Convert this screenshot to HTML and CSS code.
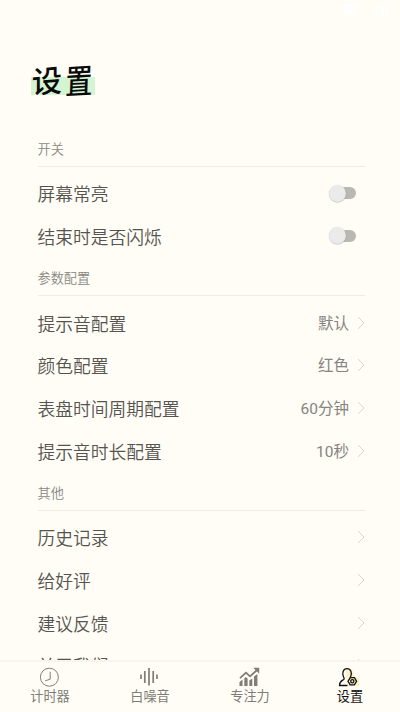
FILE: index.html
```
<!DOCTYPE html>
<html lang="zh-CN">
  <head>
    <meta charset="UTF-8" />
    <meta name="viewport" content="width=device-width, initial-scale=1.0" />
    <title>设置</title>
    <link rel="stylesheet" href="styles.css" />
  </head>

  <body>
    <header class="status">
      <svg class="status-icons" viewBox="0 0 60 20">
        <path d="M9 4h9v10H9zM20 5h6v3h-6zM41 6h3v10h-3zM47 6h2v10h-2zM51 6h2v10h-2z" />
      </svg>
    </header>

    <main class="page">
      <h1 class="title"><span class="char-left">设</span><span class="char-right">置</span></h1>

      <section>
        <h2>开关</h2>
        <ul>
          <li>屏幕常亮<span class="switch"></span></li>
          <li>结束时是否闪烁<span class="switch"></span></li>
        </ul>
      </section>

      <section>
        <h2>参数配置</h2>
        <ul>
          <li>提示音配置<span class="value">默认</span><svg class="arrow" viewBox="0 0 8 14"><path d="M1 1l6 6-6 6" /></svg></li>
          <li>颜色配置<span class="value">红色</span><svg class="arrow" viewBox="0 0 8 14"><path d="M1 1l6 6-6 6" /></svg></li>
          <li>表盘时间周期配置<span class="value">60分钟</span><svg class="arrow" viewBox="0 0 8 14"><path d="M1 1l6 6-6 6" /></svg></li>
          <li>提示音时长配置<span class="value">10秒</span><svg class="arrow" viewBox="0 0 8 14"><path d="M1 1l6 6-6 6" /></svg></li>
        </ul>
      </section>

      <section>
        <h2>其他</h2>
        <ul>
          <li>历史记录<span class="value"></span><svg class="arrow" viewBox="0 0 8 14"><path d="M1 1l6 6-6 6" /></svg></li>
          <li>给好评<span class="value"></span><svg class="arrow" viewBox="0 0 8 14"><path d="M1 1l6 6-6 6" /></svg></li>
          <li>建议反馈<span class="value"></span><svg class="arrow" viewBox="0 0 8 14"><path d="M1 1l6 6-6 6" /></svg></li>
          <li>关于我们<span class="value"></span><svg class="arrow" viewBox="0 0 8 14"><path d="M1 1l6 6-6 6" /></svg></li>
        </ul>
      </section>
    </main>

    <nav class="tabs">
      <a class="tab">
        <svg class="icon" viewBox="0 0 20 20">
          <circle cx="9.4" cy="10.2" r="9" />
          <path d="M10.2 4.8v7.4l-5 1.6" />
        </svg>
        计时器
      </a>
      <a class="tab">
        <svg class="icon bars" viewBox="0 0 20 20">
          <path d="M1 7.5v4.5M4.8 4v12M9 1v17.5M13.2 4v12M17 7.5v4.5" />
        </svg>
        白噪音
      </a>
      <a class="tab">
        <svg class="icon chart" viewBox="0 0 20 20">
          <path class="line" d="M0 11.2L6 5.7l4 3.7L17 3" />
          <path d="M13.2.8h6v6zM-.5 15l3-2.5V19h-3zM4.3 11.500l1.500-1.500 1.800 1.500V19H4.300zM9.300 13.500l3-2V19h-3zM14 9.500l3.400-2.500V19H14z" />
        </svg>
        专注力
      </a>
      <a class="tab active">
        <svg class="icon" viewBox="0 0 20 20">
          <path class="glow" d="M5 2h7l2 7 5 2v8H8z" />
          <path d="M7.5 18.500H-.5c0-3 1.300-4.300 3.200-5.300 1.600-.8 1.900-1.700.9-3.100C1.600 6.400 3.200 1.700 7 1.700s5.500 4.300 3.500 8.300" />
          <path d="M8 14.300l2.200-3.600h4.200l2.200 3.600-2.200 3.600h-4.200z" />
          <circle cx="12.300" cy="14.300" r="1.600" />
        </svg>
        设置
      </a>
    </nav>
  </body>
</html>
```
FILE: styles.css
```
* {
  margin: 0;
  padding: 0;
  box-sizing: border-box;
}

body {
  height: 712px;
  overflow: hidden;
  display: flex;
  flex-direction: column;
  background-color: #fffdf6;
  color: #555450;
  font-family: Roboto, "Noto Sans CJK SC", sans-serif;
}

.status {
  flex: none;
  height: 20px;
  display: flex;
  justify-content: flex-end;
  padding-right: 5px;
}

.status-icons {
  width: 60px;
  height: 20px;
  fill: #fff;
}

.page {
  flex: 1;
  min-height: 0;
  overflow: hidden;
  padding: 44px 35px 0 37.5px;
}

.title {
  display: flex;
  width: 64px;
  height: 34px;
  margin-left: -6.5px;
  margin-bottom: 30px;
  background: linear-gradient(#d5f4d2, #d5f4d2) 0 13px / 64px 18px no-repeat;
  color: #0a0a0a;
  font-size: 32px;
  font-weight: 500;
  line-height: 37px;
}

.char-left {
  transform: rotate(-5deg) skewX(-5deg) scale(0.95, 0.95);
}

.char-right {
  transform: rotate(-3deg) skewX(-5deg) scale(0.85, 1.05);
}

h2 {
  height: 38.9px;
  padding-top: 11px;
  border-bottom: 1px solid #eeece5;
  color: #898883;
  font-size: 13.2px;
  font-weight: 350;
  line-height: 22px;
}

ul {
  padding-top: 5.1px;
  list-style: none;
}

li {
  height: 42.67px;
  display: flex;
  align-items: center;
  font-size: 17.75px;
  font-weight: 350;
}

.switch {
  display: flex;
  align-items: center;
  width: 26px;
  height: 12px;
  margin-left: auto;
  margin-right: 9px;
  border-radius: 6px;
  background-color: #b9b8b3;
}

.switch::before {
  content: "";
  width: 17px;
  height: 17px;
  flex: none;
  margin-left: -1.5px;
  border-radius: 50%;
  background-color: #ebebeb;
  box-shadow: 0 0.5px 1px rgba(0, 0, 0, 0.3);
}

.value {
  margin-left: auto;
  padding-bottom: 2px;
  color: #85847f;
  font-size: 15.5px;
  font-weight: 400;
}

.arrow {
  width: 8px;
  height: 14px;
  margin-left: 8px;
  fill: none;
  stroke: #d8d6d0;
}

.tabs {
  flex: none;
  height: 52px;
  display: flex;
  border-top: 2px solid #f7f5ee;
  background-color: #fffdf6;
}

.tab {
  flex: 1;
  display: flex;
  flex-direction: column;
  align-items: center;
  padding-top: 5px;
  color: #7e7d78;
  font-size: 13.2px;
  line-height: 20px;
}

.icon {
  width: 20px;
  height: 20px;
  overflow: visible;
  fill: none;
  stroke: currentColor;
  stroke-width: 1;
}

.bars {
  stroke-width: 1.7;
}

.chart {
  fill: currentColor;
  stroke: none;
}

.line {
  fill: none;
  stroke: currentColor;
  stroke-width: 1.8;
}

.active {
  color: #111;
}

.active .icon {
  stroke-width: 1.3;
}

.icon .glow {
  fill: #fbf0c8;
  stroke: none;
}
```
